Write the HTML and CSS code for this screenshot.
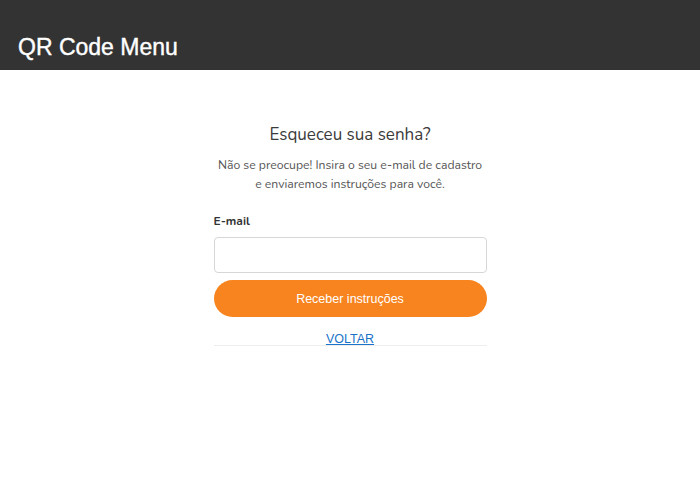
FILE: index.html
```html
<!DOCTYPE html>
<html lang="pt-BR">
<head>
<meta charset="utf-8">
<title>QR Code Menu</title>
<link rel="stylesheet" href="styles.css">
</head>
<body>
<header class="topbar">
  <h1 class="brand">QR Code Menu</h1>
</header>
<main class="page">
  <section class="card">
    <h2 class="title">Esqueceu sua senha?</h2>
    <p class="lead">Não se preocupe! Insira o seu e-mail de cadastro<br>e enviaremos instruções para você.</p>
    <form class="form">
      <label class="label" for="email">E-mail</label>
      <input class="input" id="email" type="email">
      <button class="btn" type="button">Receber instruções</button>
    </form>
    <div class="back">
      <a class="back-link" href="#">VOLTAR</a>
    </div>
  </section>
</main>
</body>
</html>
```
FILE: styles.css
```css
* { box-sizing: border-box; }
html, body { margin: 0; padding: 0; background: #fff; }
body { font-family: "Nunito", "Lato", "Open Sans", sans-serif; color: #444; }

.topbar {
  height: 70px;
  background: #333333;
  display: flex;
  align-items: flex-end;
  padding: 0 18px 10px;
}
.brand {
  margin: 0;
  font-family: "Liberation Sans", Arial, sans-serif;
  font-size: 23px;
  font-weight: normal;
  color: #fff;
  line-height: 26px;
  -webkit-text-stroke: 0.4px #fff;
}

.page {
  display: flex;
  justify-content: center;
  padding-top: 53px;
}
.card {
  width: 273px;
  display: flex;
  flex-direction: column;
}
.title {
  margin: 0;
  text-align: center;
  font-size: 17px;
  font-weight: normal;
  color: #3b3b3b;
  line-height: 24px;
}
.lead {
  margin: 9px 0 0;
  text-align: center;
  font-size: 12.2px;
  line-height: 19px;
  color: #555;
}
.form {
  display: flex;
  flex-direction: column;
  margin-top: 19px;
}
.label {
  font-size: 12px;
  font-weight: bold;
  color: #333;
  line-height: 16px;
}
.input {
  margin-top: 8px;
  height: 36px;
  border: 1px solid #d6d6d6;
  border-radius: 4px;
  padding: 0 10px;
  font-size: 14px;
  outline: none;
}
.btn {
  margin-top: 7px;
  height: 37px;
  border: 0;
  border-radius: 19px;
  background: #f7841f;
  color: #fff;
  font-family: "Liberation Sans", Arial, sans-serif;
  font-size: 12.5px;
  cursor: pointer;
}
.back {
  margin-top: 15px;
  text-align: center;
  border-bottom: 1px solid #eeeeee;
  line-height: 13px;
  height: 14px;
}
.back-link {
  font-family: "Liberation Sans", Arial, sans-serif;
  font-size: 12.5px;
  color: #1a73c8;
  text-decoration: underline;
}
```
